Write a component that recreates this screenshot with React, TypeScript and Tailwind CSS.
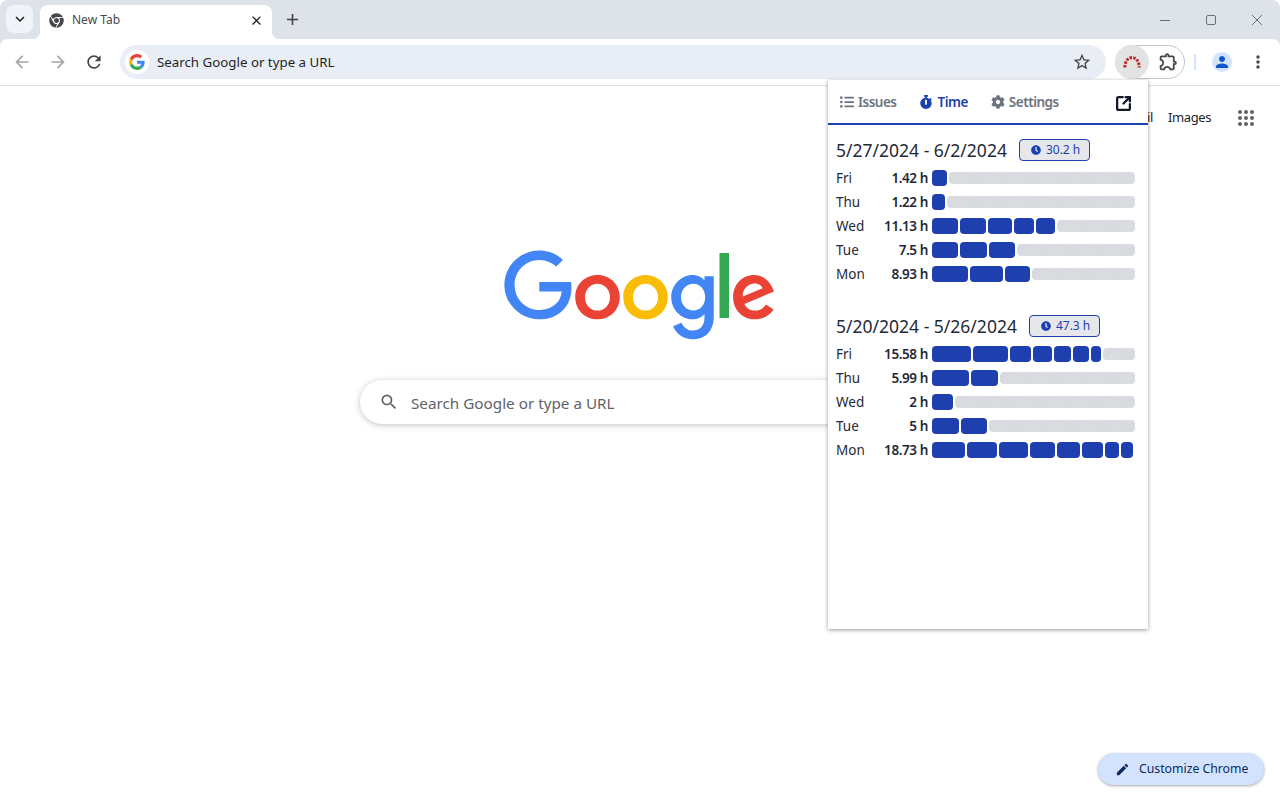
import { FaChrome, FaClock, FaCog, FaListUl, FaStopwatch } from "react-icons/fa";
import {
  MdAdd,
  MdArrowBack,
  MdArrowForward,
  MdClose,
  MdEdit,
  MdKeyboardArrowDown,
  MdMoreVert,
  MdOutlineExtension,
  MdPerson,
  MdRefresh,
  MdSearch,
  MdStarBorder,
} from "react-icons/md";
import { SquareArrowOutUpRight } from "lucide-react";

type Day = { name: string; hours: string; segments: number[]; rest: boolean };
type Week = { range: string; total: string; days: Day[] };

const weeks: Week[] = [
  {
    range: "5/27/2024 - 6/2/2024",
    total: "30.2 h",
    days: [
      { name: "Fri", hours: "1.42 h", segments: [15], rest: true },
      { name: "Thu", hours: "1.22 h", segments: [13], rest: true },
      { name: "Wed", hours: "11.13 h", segments: [26, 26, 24, 20, 19], rest: true },
      { name: "Tue", hours: "7.5 h", segments: [26, 27, 26], rest: true },
      { name: "Mon", hours: "8.93 h", segments: [36, 33, 25], rest: true },
    ],
  },
  {
    range: "5/20/2024 - 5/26/2024",
    total: "47.3 h",
    days: [
      { name: "Fri", hours: "15.58 h", segments: [39, 35, 21, 19, 17, 16, 10], rest: true },
      { name: "Thu", hours: "5.99 h", segments: [37, 27], rest: true },
      { name: "Wed", hours: "2 h", segments: [21], rest: true },
      { name: "Tue", hours: "5 h", segments: [27, 26], rest: true },
      { name: "Mon", hours: "18.73 h", segments: [33, 30, 29, 25, 23, 21, 14, 12], rest: false },
    ],
  },
];

function GoogleG() {
  return (
    <svg viewBox="0 0 48 48" className="h-4 w-4">
      <path fill="#EA4335" d="M24 9.5c3.54 0 6.71 1.22 9.21 3.6l6.85-6.85C35.9 2.38 30.47 0 24 0 14.62 0 6.51 5.38 2.56 13.22l7.98 6.19C12.43 13.72 17.74 9.5 24 9.5z" />
      <path fill="#4285F4" d="M46.98 24.55c0-1.57-.15-3.09-.38-4.55H24v9.02h12.94c-.58 2.96-2.26 5.48-4.78 7.18l7.73 6c4.51-4.18 7.09-10.36 7.09-17.65z" />
      <path fill="#FBBC05" d="M10.53 28.59c-.48-1.45-.76-2.99-.76-4.59s.27-3.14.76-4.59l-7.98-6.19C.92 16.46 0 20.12 0 24c0 3.88.92 7.54 2.56 10.78l7.97-6.19z" />
      <path fill="#34A853" d="M24 48c6.48 0 11.93-2.13 15.89-5.81l-7.73-6c-2.15 1.45-4.92 2.3-8.16 2.3-6.26 0-11.57-4.22-13.47-9.91l-7.98 6.19C6.51 42.62 14.62 48 24 48z" />
    </svg>
  );
}

function GoogleLogo() {
  return (
    <svg viewBox="0 0 272 92" className="h-[92px] w-[272px]">
      <path fill="#EA4335" d="M115.75 47.18c0 12.77-9.99 22.18-22.25 22.18s-22.25-9.41-22.25-22.18C71.25 34.32 81.24 25 93.5 25s22.25 9.32 22.25 22.18zm-9.74 0c0-7.98-5.79-13.44-12.51-13.44S80.99 39.2 80.99 47.18c0 7.9 5.79 13.44 12.51 13.44s12.51-5.55 12.51-13.44z" />
      <path fill="#FBBC05" d="M163.75 47.18c0 12.77-9.99 22.18-22.25 22.18s-22.25-9.41-22.25-22.18c0-12.85 9.99-22.18 22.25-22.18s22.25 9.32 22.25 22.18zm-9.74 0c0-7.98-5.79-13.44-12.51-13.44s-12.51 5.46-12.51 13.44c0 7.9 5.79 13.44 12.51 13.44s12.51-5.55 12.51-13.44z" />
      <path fill="#4285F4" d="M209.75 26.34v39.82c0 16.38-9.66 23.07-21.08 23.07-10.75 0-17.22-7.19-19.66-13.07l8.48-3.53c1.51 3.61 5.21 7.87 11.17 7.87 7.31 0 11.84-4.51 11.84-13v-3.19h-.34c-2.18 2.69-6.38 5.04-11.68 5.04-11.09 0-21.25-9.66-21.25-22.09 0-12.52 10.16-22.26 21.25-22.26 5.29 0 9.49 2.35 11.68 4.96h.34v-3.61h9.25zm-8.56 20.92c0-7.81-5.21-13.52-11.84-13.52-6.72 0-12.35 5.71-12.35 13.52 0 7.73 5.63 13.36 12.35 13.36 6.63 0 11.84-5.63 11.84-13.36z" />
      <path fill="#34A853" d="M225 3v65h-9.5V3h9.5z" />
      <path fill="#EA4335" d="M262.02 54.48l7.56 5.04c-2.44 3.61-8.32 9.83-18.48 9.83-12.6 0-22.01-9.74-22.01-22.18 0-13.19 9.49-22.18 20.92-22.18 11.51 0 17.14 9.16 18.98 14.11l1.01 2.52-29.65 12.28c2.27 4.45 5.8 6.72 10.75 6.72 4.96 0 8.4-2.44 10.92-6.14zm-23.27-7.98l19.82-8.23c-1.09-2.77-4.37-4.7-8.23-4.7-4.95 0-11.84 4.37-11.59 12.93z" />
      <path fill="#4285F4" d="M35.29 41.41V32H67c.31 1.64.47 3.58.47 5.68 0 7.06-1.93 15.79-8.15 22.01-6.05 6.3-13.78 9.66-24.02 9.66C16.32 69.35.36 53.89.36 34.91.36 15.93 16.32.47 35.3.47c10.5 0 17.98 4.12 23.6 9.49l-6.64 6.64c-4.03-3.78-9.49-6.72-16.97-6.72-13.86 0-24.7 11.17-24.7 25.03 0 13.86 10.84 25.03 24.7 25.03 8.99 0 14.11-3.61 17.39-6.89 2.66-2.66 4.41-6.46 5.1-11.65l-22.49.01z" />
    </svg>
  );
}

// red arc of dots, the time tracker extension's icon
function ArcIcon() {
  return (
    <svg viewBox="0 0 18 12" className="h-3 w-[18px]" fill="none">
      <path d="M1.8 11.5 C2 5 5 1.6 9 1.6 C13 1.6 16 5 16.2 11.5" stroke="#bf2a2a" strokeWidth="3" strokeDasharray="2.5 1.2" />
    </svg>
  );
}

function AppsGrid() {
  return (
    <svg viewBox="0 0 16 16" className="h-4 w-4" fill="#5f6368">
      {[2, 8, 14].map((y) =>
        [2, 8, 14].map((x) => <circle key={`${x}-${y}`} cx={x} cy={y} r="2" />)
      )}
    </svg>
  );
}

function WindowControls() {
  return (
    <div className="flex items-center text-[#6b7078]">
      <div className="flex h-[38px] w-[46px] items-center justify-center">
        <svg width="10" height="10" viewBox="0 0 10 10" stroke="currentColor">
          <path d="M0 5.5h10" />
        </svg>
      </div>
      <div className="flex h-[38px] w-[46px] items-center justify-center">
        <svg width="10" height="10" viewBox="0 0 10 10" fill="none" stroke="currentColor">
          <rect x="0.5" y="0.5" width="9" height="9" rx="1.5" />
        </svg>
      </div>
      <div className="flex h-[38px] w-[46px] items-center justify-center">
        <svg width="10" height="10" viewBox="0 0 10 10" stroke="currentColor">
          <path d="M0 0l10 10M10 0L0 10" />
        </svg>
      </div>
    </div>
  );
}

function TabBar() {
  return (
    <div className="flex h-[39px] items-end justify-between rounded-t-lg bg-[#dee3ea]">
      <div className="flex h-full items-end">
        <div className="mb-[6px] ml-[6px] flex h-[28px] w-[27px] items-center justify-center rounded-lg bg-[#f0f3f7] text-[#1f1f1f]">
          <MdKeyboardArrowDown size={18} />
        </div>
        <div className="relative ml-[7px] flex h-[34px] w-[232px] items-center rounded-t-lg bg-white pb-[4px] pl-[9px] pr-[8px]">
          <div className="absolute bottom-0 left-[-8px] h-2 w-2 bg-[radial-gradient(circle_at_0_0,#dee3ea_8px,#ffffff_8.5px)]" />
          <div className="absolute bottom-0 right-[-8px] h-2 w-2 bg-[radial-gradient(circle_at_100%_0,#dee3ea_8px,#ffffff_8.5px)]" />
          <FaChrome size={15} className="text-[#45474a]" />
          <span className="ml-[8px] flex-1 text-xs text-[#45474a]">New Tab</span>
          <MdClose size={15} className="text-[#1f1f1f]" />
        </div>
        <div className="mb-[10px] ml-[10px] flex h-5 w-5 items-center justify-center text-[#3c4043]">
          <MdAdd size={19} />
        </div>
      </div>
      <WindowControls />
    </div>
  );
}

function Toolbar() {
  return (
    <div className="bg-[#dee3ea]">
      <div className="flex h-[47px] items-center rounded-t-lg border-b border-[#dfe1e5] bg-white pb-[1px] pl-[12px] pr-[12px]">
        <MdArrowBack size={20} className="text-[#a4a6a9]" />
        <MdArrowForward size={20} className="ml-[16px] text-[#a4a6a9]" />
        <MdRefresh size={20} className="ml-[16px] text-[#474747]" />
        <div className="ml-[16px] flex h-[34px] w-[986px] items-center rounded-full bg-[#e9eef6] pl-[5px] pr-[14px]">
          <div className="flex h-6 w-6 items-center justify-center rounded-full bg-white">
            <GoogleG />
          </div>
          <span className="ml-[8px] flex-1 pt-[2px] text-[13.3px] text-[#1f1f1f]">Search Google or type a URL</span>
          <MdStarBorder size={20} className="text-[#474747]" />
        </div>
        <div className="ml-[9px] flex h-[34px] w-[70px] items-center rounded-full border border-[#c4c7c9]">
          <div className="ml-[-1px] flex h-[34px] w-[34px] items-center justify-center rounded-full bg-[#e3e3e3]">
            <ArcIcon />
          </div>
          <MdOutlineExtension size={21} className="ml-[9px] text-[#474747]" />
        </div>
        <div className="ml-[9px] h-4 w-[2px] bg-[#d3e3fd]" />
        <div className="ml-[16px] flex h-5 w-5 items-center justify-center rounded-full bg-[#d3e3fd] text-[#0b57d0]">
          <MdPerson size={18} />
        </div>
        <MdMoreVert size={20} className="ml-[16px] text-[#474747]" />
      </div>
    </div>
  );
}

function DayRow({ day }: { day: Day }) {
  return (
    <div className="flex h-6 items-center">
      <span className="w-[40px] pt-[1px] text-[13.5px] text-[#1f2937]">{day.name}</span>
      <span className="w-[52px] text-right text-[13.5px] font-semibold tracking-[-0.4px] text-[#1f2937]">{day.hours}</span>
      <div className="ml-[4px] flex w-[203px] items-center gap-[2px]">
        {day.segments.map((w, i) => (
          <div key={i} className="h-4 rounded bg-[#1e40af]" style={{ width: w }} />
        ))}
        {day.rest && (
          <div className="h-3 flex-1 rounded bg-[repeating-linear-gradient(135deg,#d7dade_0,#d7dade_10px,#dadce0_10px,#dadce0_20px)]" />
        )}
      </div>
    </div>
  );
}

function TimePopup() {
  return (
    <div className="absolute left-[828px] top-[80px] h-[549px] w-[320px] bg-white shadow-[0_1px_4px_rgba(0,0,0,0.4)]">
      <div className="flex h-[45px] items-center border-b-2 border-[#1e40af] pl-[12px] text-[13.5px] font-semibold tracking-[-0.5px] text-[#6b7280]">
        <FaListUl size={14} />
        <span className="ml-[4px] pt-[1px]">Issues</span>
        <FaStopwatch size={14} className="ml-[23px] text-[#1e40af]" />
        <span className="ml-[4px] pt-[1px] text-[#1e40af]">Time</span>
        <FaCog size={14} className="ml-[23px]" />
        <span className="ml-[4px] pt-[1px]">Settings</span>
        <SquareArrowOutUpRight size={17} strokeWidth={3.2} className="ml-[56px] mt-[4px] text-[#111827]" />
      </div>
      <div className="flex flex-col gap-[28px] px-[8px] pt-[13px]">
        {weeks.map((week) => (
          <div key={week.range}>
            <div className="mb-[4px] flex h-[24px] items-center">
              <span className="pt-[1px] text-[17.5px] leading-none text-[#1f2937]">{week.range}</span>
              <span className="ml-[12px] flex h-[22px] w-[71px] items-center gap-[5px] rounded border border-[#1e40af] bg-[#e5e7eb] pl-[11px] text-xs text-[#1e40af]">
                <FaClock size={10} />
                {week.total}
              </span>
            </div>
            {week.days.map((day) => (
              <DayRow key={day.name} day={day} />
            ))}
          </div>
        ))}
      </div>
    </div>
  );
}

function NewTabPage() {
  return (
    <div className="relative flex-1">
      <div className="flex items-center justify-end pr-[26px] pt-[22px] text-[13px] tracking-[-0.4px] text-[#1f1f1f]">
        <span>Gmail</span>
        <span className="ml-[15px]">Images</span>
        <span className="ml-[27px]">
          <AppsGrid />
        </span>
      </div>
      <div className="mt-[122px] flex justify-center">
        <GoogleLogo />
      </div>
      <div className="mx-auto mt-[38px] flex h-[44px] w-[560px] items-center rounded-full bg-white pl-[19px] shadow-[0_1px_6px_rgba(32,33,36,0.28)]">
        <MdSearch size={20} className="text-[#5f6368]" />
        <span className="ml-[12px] pt-[3px] text-[15.25px] text-[#5f6368]">Search Google or type a URL</span>
      </div>
      <div className="absolute bottom-[15px] right-[16px] flex h-[32px] w-[166px] items-center rounded-full bg-[#d3e3fd] pl-[17px] text-[12.25px] text-[#0a2a5e] shadow-[0_1px_3px_rgba(0,0,0,0.35)]">
        <MdEdit size={15} />
        <span className="ml-[9px] pt-[1px]">Customize Chrome</span>
      </div>
    </div>
  );
}

export default function App() {
  return (
    <div className="relative flex h-[800px] w-[1280px] flex-col overflow-hidden bg-white font-['Noto_Sans',sans-serif]">
      <TabBar />
      <Toolbar />
      <div className="flex flex-1 flex-col bg-white">
        <NewTabPage />
      </div>
      <TimePopup />
    </div>
  );
}
